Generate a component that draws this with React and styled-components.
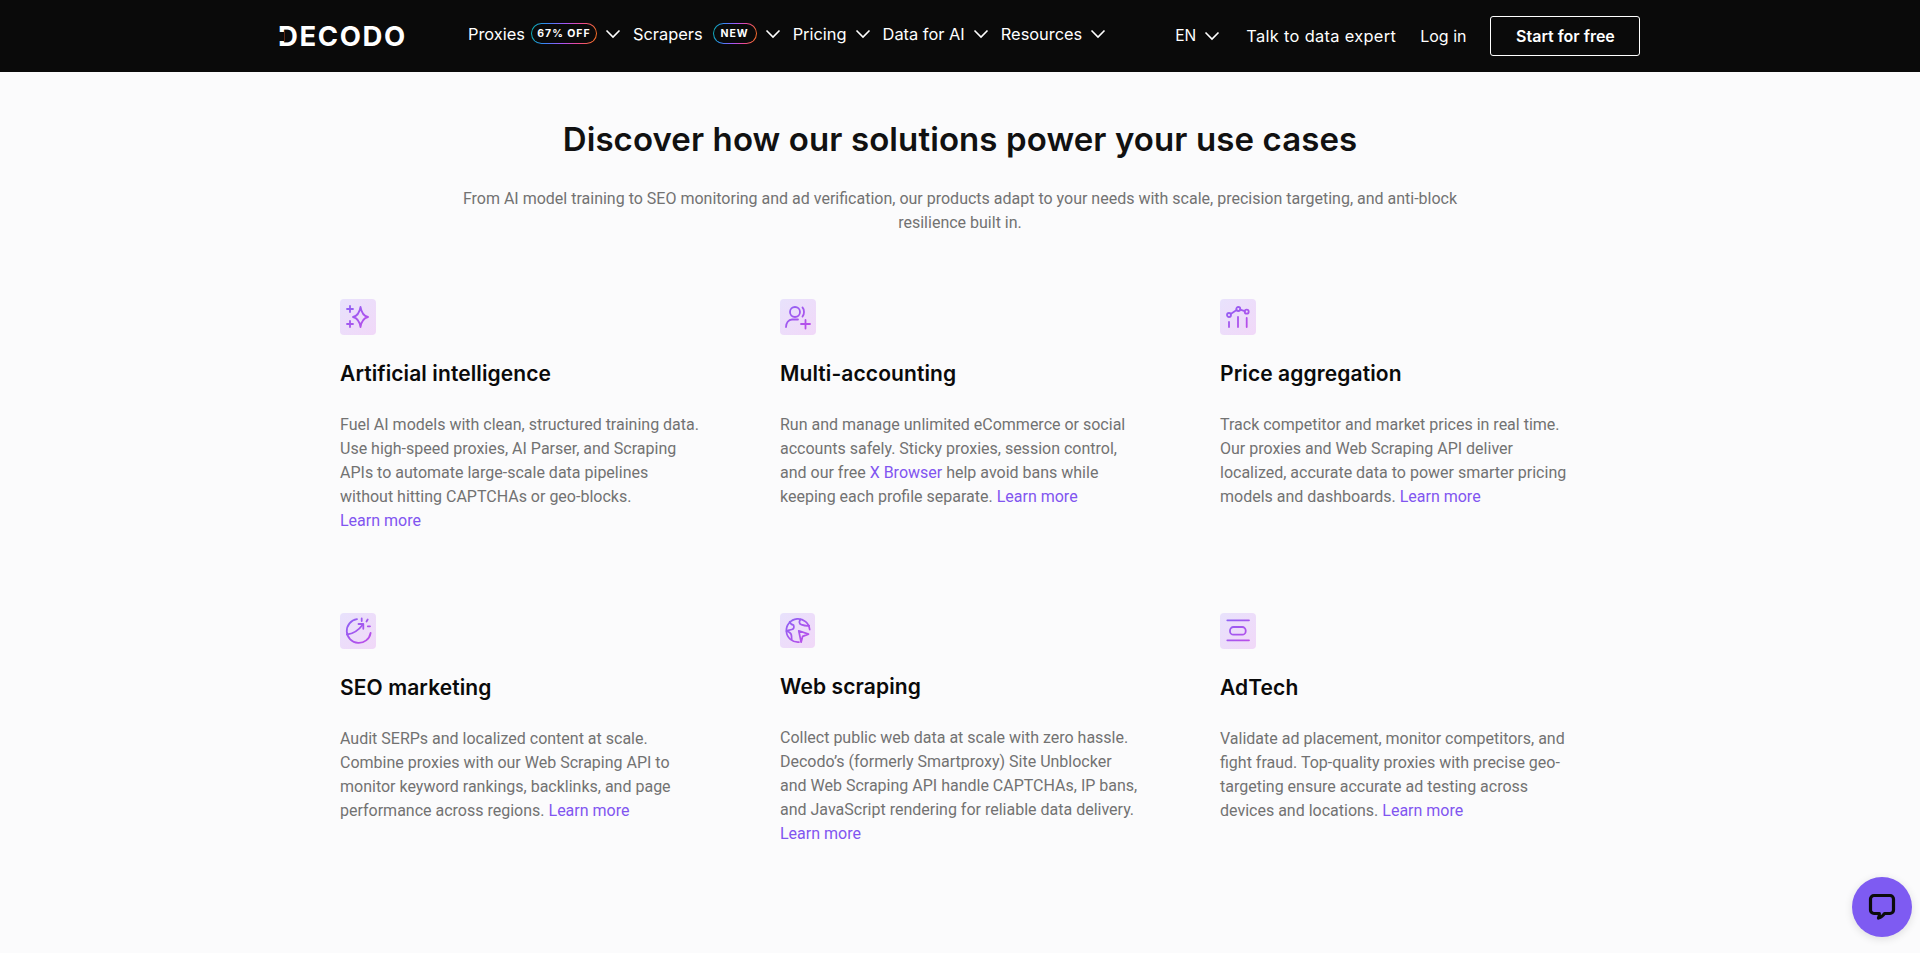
import React from "react";
import styled, { createGlobalStyle } from "styled-components";

const Global = createGlobalStyle`
  html, body { margin: 0; padding: 0; background: #fbfbfc; overflow: hidden; }
  * { box-sizing: border-box; }
`;

const Page = styled.div`
  width: 1920px;
  height: 953px;
  position: relative;
  overflow: hidden;
  background: #fbfbfc;
  font-family: Roboto, sans-serif;
`;
const Header = styled.header`
  height: 72px;
  background: #0a0a0a;
  display: flex;
  align-items: center;
  padding: 0 0 0 278px;
  color: #fff;
  font-family: Inter, sans-serif;
  font-size: 16.4px;
`;
const Logo = styled.div`
  position: relative;
  width: 190px;
  font-family: Inter, sans-serif;
  font-weight: 700;
  font-size: 27.5px;
  line-height: 28px;
  letter-spacing: 1.6px;
  color: #fff;
  white-space: nowrap;
`;
const LogoNotch = styled.span`
  position: absolute;
  left: 0;
  top: 10px;
  width: 6px;
  height: 9px;
  background: #0a0a0a;
`;
const Nav = styled.nav`
  display: flex;
  align-items: center;
  margin-top: -5px;
`;
const NavItem = styled.a`
  display: flex;
  align-items: center;
  margin-right: ${(p) => p.$mr ?? 12}px;
  white-space: nowrap;
`;
const Pill = styled.span`
  display: inline-flex;
  align-items: center;
  justify-content: center;
  width: ${(p) => p.$w}px;
  height: 21px;
  margin-left: ${(p) => p.$ml}px;
  border-radius: 11px;
  border: 1px solid transparent;
  background:
    linear-gradient(#0a0a0a, #0a0a0a) padding-box,
    linear-gradient(100deg, #06b6b0 0%, #3b82f6 25%, #a855f7 50%, #ec4899 72%, #f97316 100%) border-box;
  font-size: 10.5px;
  font-weight: 700;
  letter-spacing: 1px;
`;
const Chevron = styled.svg`
  width: 16px;
  height: 16px;
  margin-left: 8px;
  fill: none;
  stroke: #fff;
  stroke-width: 1.6;
`;
const Right = styled.div`
  display: flex;
  align-items: center;
  margin-left: 69px;
`;
const RightLink = styled.a`
  margin-top: -1px;
  margin-right: ${(p) => p.$mr}px;
  white-space: nowrap;
  display: flex;
  align-items: center;
  font-size: ${(p) => p.$size ?? 16.4}px;
  letter-spacing: ${(p) => p.$ls ?? 0}px;
`;
const StartButton = styled.a`
  width: 150px;
  height: 40px;
  display: flex;
  align-items: center;
  justify-content: center;
  border: 1px solid #fff;
  border-radius: 3px;
  font-weight: 600;
  font-size: 16px;
  white-space: nowrap;
`;
const Main = styled.main`
  padding-top: 43px;
  display: flex;
  flex-direction: column;
  align-items: center;
`;
const Title = styled.h2`
  margin: 0;
  font-family: Inter, sans-serif;
  font-weight: 600;
  font-size: 33px;
  line-height: 48px;
  letter-spacing: 0.1px;
  color: #111;
`;
const Subtitle = styled.p`
  margin: 24px 0 0;
  width: 1010px;
  text-align: center;
  font-size: 16px;
  line-height: 24px;
  color: #727272;
`;
const Grid = styled.div`
  margin-top: 64px;
  width: 1240px;
  display: grid;
  grid-template-columns: repeat(3, 360px);
  column-gap: 80px;
  row-gap: 80px;
`;
const Card = styled.article``;
const IconBox = styled.div`
  width: ${(p) => p.$size}px;
  height: ${(p) => p.$size}px;
  border-radius: 4px;
  background: linear-gradient(135deg, #e8e2fc, #f1d8f8);
`;
const Icon = styled.svg`
  display: block;
  width: 100%;
  height: 100%;
  fill: none;
  stroke: url(#ig);
  stroke-width: 1.8;
  stroke-linecap: round;
  stroke-linejoin: round;
`;
const CardTitle = styled.h3`
  margin: 23px 0 0;
  font-family: Inter, sans-serif;
  font-weight: 600;
  font-size: 21px;
  line-height: 32px;
  letter-spacing: 0.1px;
  color: #0a0a0a;
`;
const CardText = styled.p`
  margin: 23px 0 0;
  font-size: 16px;
  line-height: 24px;
  color: #727272;
`;
const Link = styled.a`
  color: #8155f0;
  white-space: nowrap;
`;
const ChatButton = styled.div`
  position: absolute;
  left: 1852px;
  top: 877px;
  width: 60px;
  height: 60px;
  border-radius: 50%;
  background: #7e5bf2;
  box-shadow: 0 2px 8px rgba(0, 0, 0, 0.12);
  display: flex;
  align-items: center;
  justify-content: center;
`;
const Defs = styled.svg`
  position: absolute;
  width: 0;
  height: 0;
`;

const Chev = () => (
  <Chevron viewBox="0 0 16 16">
    <path d="M1.500 4.500 L8 11 L14.500 4.500" />
  </Chevron>
);

const icons = {
  ai: (
    <>
      <path d="M20.500 8c1 6 3 9 7.500 10-4.500 1-6.500 4-7.500 10-1-6-3-9-7.500-10 4.500-1 6.500-4 7.500-10z" />
      <path d="M10 7v6M7 10h6M10 22v6M7 25h6" />
    </>
  ),
  user: (
    <>
      <circle cx="15" cy="13" r="5" />
      <path d="M22.500 8.500c2 2 2 7 0 9" />
      <path d="M6 28c0-4 2.500-7.500 6-7.500h6" />
      <path d="M25.500 21v8.500M21 25h9" />
    </>
  ),
  price: (
    <>
      <circle cx="9" cy="16" r="2" />
      <circle cx="18.300" cy="10" r="2" />
      <circle cx="26.700" cy="12.700" r="2" />
      <path d="M10.700 14.900 16.600 11.100M20.200 10.600 24.800 12.100" />
      <path d="M9 23v5M18 18v10M26.700 19v9" />
    </>
  ),
  seo: (
    <>
      <path d="M17 6.100A12 12 0 1 0 30.600 20" />
      <path d="M6.900 21.500c6-.5 11.500-4 16-10" />
      <path d="M18.500 11h4.800v4.800" />
      <path d="M21.700 5.500v2.500M27.700 6.500l-1.200 2M30 13.300h-2.200" />
    </>
  ),
  web: (
    <>
      <path d="M19.500 30A12 12 0 1 1 30.500 17" />
      <path d="M10 9c.5 2 2 3 4 3.500.8 2.500 0 4-1.800 4.500-2.500.7-4.500 1-5.500 1.500 2 .5 4 1.500 4.800 3.500.4 1.200.5 3 .5 5" />
      <path d="M21 6.500c-1.500 2.500-1.500 4.500 1 5.500 3 1 5.500 1.500 8 1" />
      <path d="M19.300 18.300 29.300 21.700 23.300 24 21.700 30z" />
    </>
  ),
  ad: (
    <>
      <path d="M7.300 7.300H29M7.300 27.300H29" />
      <rect x="10" y="14" width="15.700" height="7.700" rx="3.500" />
    </>
  ),
};

const cards = [
  { icon: "ai", size: 36, title: "Artificial intelligence", body: <>Fuel AI models with clean, structured training data. Use high-speed proxies, AI Parser, and Scraping APIs to automate large-scale data pipelines without hitting CAPTCHAs or geo-blocks. <Link>Learn more</Link></> },
  { icon: "user", size: 36, title: "Multi-accounting", body: <>Run and manage unlimited eCommerce or social accounts safely. Sticky proxies, session control, and our free <Link>X Browser</Link> help avoid bans while keeping each profile separate. <Link>Learn more</Link></> },
  { icon: "price", size: 36, title: "Price aggregation", body: <>Track competitor and market prices in real time. Our proxies and Web Scraping API deliver localized, accurate data to power smarter pricing models and dashboards. <Link>Learn more</Link></> },
  { icon: "seo", size: 36, title: "SEO marketing", body: <>Audit SERPs and localized content at scale. Combine proxies with our Web Scraping API to monitor keyword rankings, backlinks, and page performance across regions. <Link>Learn more</Link></> },
  { icon: "web", size: 35, title: "Web scraping", body: <>Collect public web data at scale with zero hassle. Decodo’s (formerly Smartproxy) Site Unblocker and Web Scraping API handle CAPTCHAs, IP bans, and JavaScript rendering for reliable data delivery. <Link>Learn more</Link></> },
  { icon: "ad", size: 36, title: "AdTech", body: <>Validate ad placement, monitor competitors, and fight fraud. Top-quality proxies with precise geo-targeting ensure accurate ad testing across devices and locations. <Link>Learn more</Link></> },
];

export default function App() {
  return (
    <Page>
      <Global />
      <Defs>
        <defs>
          <linearGradient id="ig" gradientUnits="userSpaceOnUse" x1="5" y1="5" x2="31" y2="31">
            <stop offset="0" stopColor="#8a63f5" />
            <stop offset="1" stopColor="#c04be8" />
          </linearGradient>
        </defs>
      </Defs>
      <Header>
        <Logo>
          DECODO
          <LogoNotch />
        </Logo>
        <Nav>
          <NavItem>Proxies<Pill $w={66} $ml={6}>67% OFF</Pill><Chev /></NavItem>
          <NavItem>Scrapers<Pill $w={44} $ml={10}>NEW</Pill><Chev /></NavItem>
          <NavItem>Pricing<Chev /></NavItem>
          <NavItem>Data for AI<Chev /></NavItem>
          <NavItem $mr={0}>Resources<Chev /></NavItem>
        </Nav>
        <Right>
          <RightLink $mr={26} $size={15.5}>EN<Chev /></RightLink>
          <RightLink $mr={24} $ls={0.32}>Talk to data expert</RightLink>
          <RightLink $mr={24} $size={16}>Log in</RightLink>
          <StartButton>Start for free</StartButton>
        </Right>
      </Header>
      <Main>
        <Title>Discover how our solutions power your use cases</Title>
        <Subtitle>
          From AI model training to SEO monitoring and ad verification, our products adapt to your needs with scale, precision targeting, and anti-block resilience built in.
        </Subtitle>
        <Grid>
          {cards.map((c) => (
            <Card key={c.title}>
              <IconBox $size={c.size}>
                <Icon viewBox="0 0 36 36">{icons[c.icon]}</Icon>
              </IconBox>
              <CardTitle>{c.title}</CardTitle>
              <CardText>{c.body}</CardText>
            </Card>
          ))}
        </Grid>
      </Main>
      <ChatButton>
        <svg width="30" height="30" viewBox="0 0 30 30" fill="none">
          <path d="M7 3.500h16a3.500 3.500 0 0 1 3.500 3.500v11a3.500 3.500 0 0 1-3.500 3.500h-5.500c-1.500 2.500-4 4-6 4.500.8-1.500 1-3 .8-4.500H7A3.500 3.500 0 0 1 3.500 18V7A3.500 3.500 0 0 1 7 3.500z" stroke="#0c0c0c" strokeWidth="3.200" strokeLinejoin="round" />
        </svg>
      </ChatButton>
    </Page>
  );
}
